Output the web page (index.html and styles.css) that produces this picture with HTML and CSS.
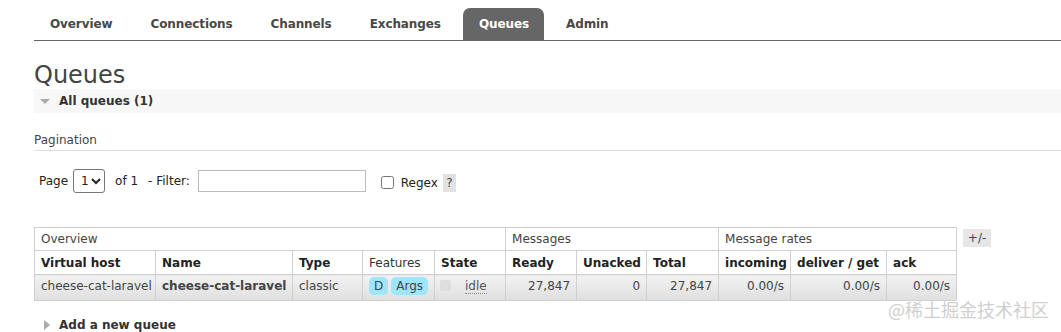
FILE: index.html
```html
<!DOCTYPE html>
<html>
<head>
<meta charset="utf-8">
<link rel="stylesheet" href="styles.css">
</head>
<body>
<div class="page">
  <nav class="tabs">
    <a class="tab">Overview</a>
    <a class="tab">Connections</a>
    <a class="tab">Channels</a>
    <a class="tab">Exchanges</a>
    <a class="tab active">Queues</a>
    <a class="tab">Admin</a>
  </nav>

  <h1 class="title">Queues</h1>

  <div class="section-head open"><span class="tri-down"></span>All queues (1)</div>

  <div class="pagination-title">Pagination</div>

  <div class="filter-row">
    <span class="lbl-page">Page</span>
    <select class="page-select"><option>1</option></select>
    <span class="lbl-of">of 1</span>
    <span class="lbl-filter">- Filter:</span>
    <input class="filter-input" type="text">
    <input class="regex-check" type="checkbox">
    <span class="lbl-regex">Regex</span>
    <span class="help">?</span>
  </div>

  <div class="table-row">
    <table class="list">
      <colgroup>
        <col class="c121"><col class="c137"><col class="c70"><col class="c72"><col class="c71">
        <col class="c71"><col class="c70"><col class="c72"><col class="c72"><col class="c96"><col class="c70">
      </colgroup>
      <thead>
        <tr class="group">
          <th colspan="5">Overview</th>
          <th colspan="3">Messages</th>
          <th colspan="3">Message rates</th>
        </tr>
        <tr class="cols">
          <th>Virtual host</th>
          <th>Name</th>
          <th>Type</th>
          <th class="plain">Features</th>
          <th>State</th>
          <th>Ready</th>
          <th>Unacked</th>
          <th>Total</th>
          <th>incoming</th>
          <th>deliver / get</th>
          <th>ack</th>
        </tr>
      </thead>
      <tbody>
        <tr class="data">
          <td class="vhost">cheese-cat-laravel</td>
          <td class="name">cheese-cat-laravel</td>
          <td>classic</td>
          <td><span class="badge">D</span><span class="badge">Args</span></td>
          <td><span class="state-dot"></span><span class="idle">idle</span></td>
          <td class="num">27,847</td>
          <td class="num">0</td>
          <td class="num">27,847</td>
          <td class="num">0.00/s</td>
          <td class="num">0.00/s</td>
          <td class="num">0.00/s</td>
        </tr>
      </tbody>
    </table>
    <span class="toggle">+/-</span>
  </div>

  <div class="section-head closed"><span class="tri-right"></span>Add a new queue</div>
</div>
<div class="watermark">@稀土掘金技术社区</div>
</body>
</html>
```

FILE: styles.css
```css
html, body {
  margin: 0;
  padding: 0;
  background: #fff;
}
body {
  font-family: "DejaVu Sans", Verdana, sans-serif;
  font-size: 12px;
  color: #333;
  overflow: hidden;
}
.page {
  padding: 8px 0 0 34px;
}

/* tabs */
.tabs {
  display: flex;
  gap: 6px;
  border-bottom: 1px solid #666;
  height: 32px;
}
.tab {
  display: block;
  padding: 0 16px;
  line-height: 33px;
  font-weight: bold;
  font-size: 12px;
  letter-spacing: -0.1px;
  color: #484848;
  border-radius: 7px 7px 0 0;
}
.tab.active {
  background: #666;
  color: #fff;
  padding: 0 15px 0 16px;
}

.title {
  margin: 22px 0 0 0;
  font-size: 24px;
  line-height: 25px;
  font-weight: normal;
  color: #444;
}

.section-head {
  display: flex;
  align-items: center;
  height: 24px;
  font-weight: bold;
  font-size: 12px;
  color: #333;
}
.section-head.open {
  margin-top: 1px;
  background: #f7f7f7;
}
.section-head.closed {
  margin-top: 12px;
}
.tri-down {
  width: 0;
  height: 0;
  border-left: 5px solid transparent;
  border-right: 5px solid transparent;
  border-top: 5px solid #aaa;
  margin: 0 9px 0 6px;
}
.tri-right {
  width: 0;
  height: 0;
  border-top: 5px solid transparent;
  border-bottom: 5px solid transparent;
  border-left: 6px solid #aaa;
  margin: 0 9px 0 10px;
}

.pagination-title {
  margin-top: 19px;
  line-height: 16px;
  padding-bottom: 2px;
  border-bottom: 1px solid #ddd;
  color: #444;
}

.filter-row {
  display: flex;
  align-items: center;
  margin-top: 18px;
  height: 24px;
  color: #222;
}
.lbl-page { margin-left: 5px; }
.page-select {
  margin-left: 5px;
  width: 32px;
  height: 24px;
  font-family: "DejaVu Sans", Verdana, sans-serif;
  font-size: 12px;
  padding: 0 0 0 3px;
  border: 1px solid #767676;
  border-radius: 3px;
  background: #fff;
  color: #222;
}
.lbl-of { margin-left: 10px; }
.lbl-filter { margin-left: 10px; }
.filter-input {
  margin: 0 0 0 8px;
  width: 168px;
  height: 22px;
  box-sizing: border-box;
  border: 1px solid #bbb;
  padding: 0 4px;
}
.regex-check {
  margin: 2px 0 0 15px;
  width: 13px;
  height: 13px;
}
.lbl-regex { margin-left: 7px; margin-top: 3px; }
.help {
  margin-left: 5px;
  margin-top: 3px;
  width: 13px;
  height: 18px;
  line-height: 18px;
  text-align: center;
  background: #e2e2e2;
  color: #444;
}

/* table */
.table-row {
  display: flex;
  align-items: flex-start;
  gap: 6px;
  margin-top: 34px;
}
table.list {
  border-collapse: collapse;
  table-layout: fixed;
  width: 923px;
  font-size: 12px;
}
.c121 { width: 121px; }
.c137 { width: 137px; }
.c70 { width: 70px; }
.c71 { width: 71px; }
.c72 { width: 72px; }
.c96 { width: 96px; }
table.list th, table.list td {
  border: 1px solid #d0d0d0;
  padding: 0 6px;
  text-align: left;
  white-space: nowrap;
  overflow: visible;
}
table.list tr.group th {
  font-weight: normal;
  color: #444;
  height: 22px;
  line-height: 14px;
}
table.list tr.cols th {
  font-weight: bold;
  color: #222;
  height: 23px;
  line-height: 14px;
}
table.list tr.cols th.plain {
  font-weight: normal;
  color: #333;
}
table.list tr.data td {
  background: linear-gradient(#f2f2f2, #dfdfdf);
  height: 21px;
  line-height: 18px;
  padding-top: 0;
  padding-bottom: 4px;
  color: #444;
}
table.list td.vhost { color: #666; }
table.list td.name { font-weight: bold; color: #111; }
table.list td.num { text-align: right; color: #555; }

.badge {
  display: inline-block;
  background: #9ee6fb;
  color: #444;
  border-radius: 5px;
  padding: 0 5px;
  line-height: 18px;
}
.badge + .badge { margin-left: 3px; }
.state-dot {
  display: inline-block;
  width: 11px;
  height: 11px;
  background: #dedede;
  border-radius: 2px;
  vertical-align: -1px;
  margin: 0 14px 0 -1px;
}
.idle {
  color: #555;
  border-bottom: 1px dotted #888;
  line-height: 14px;
  display: inline-block;
}

.toggle {
  margin-top: 2px;
  width: 28px;
  height: 18px;
  line-height: 18px;
  text-align: center;
  background: #e6e6e6;
  color: #444;
  font-size: 12px;
}

.watermark {
  position: absolute;
  left: 888px;
  top: 298px;
  font-family: "Noto Sans CJK SC", sans-serif;
  font-size: 18px;
  line-height: 22px;
  color: #cfcfcf;
  white-space: nowrap;
}
```
